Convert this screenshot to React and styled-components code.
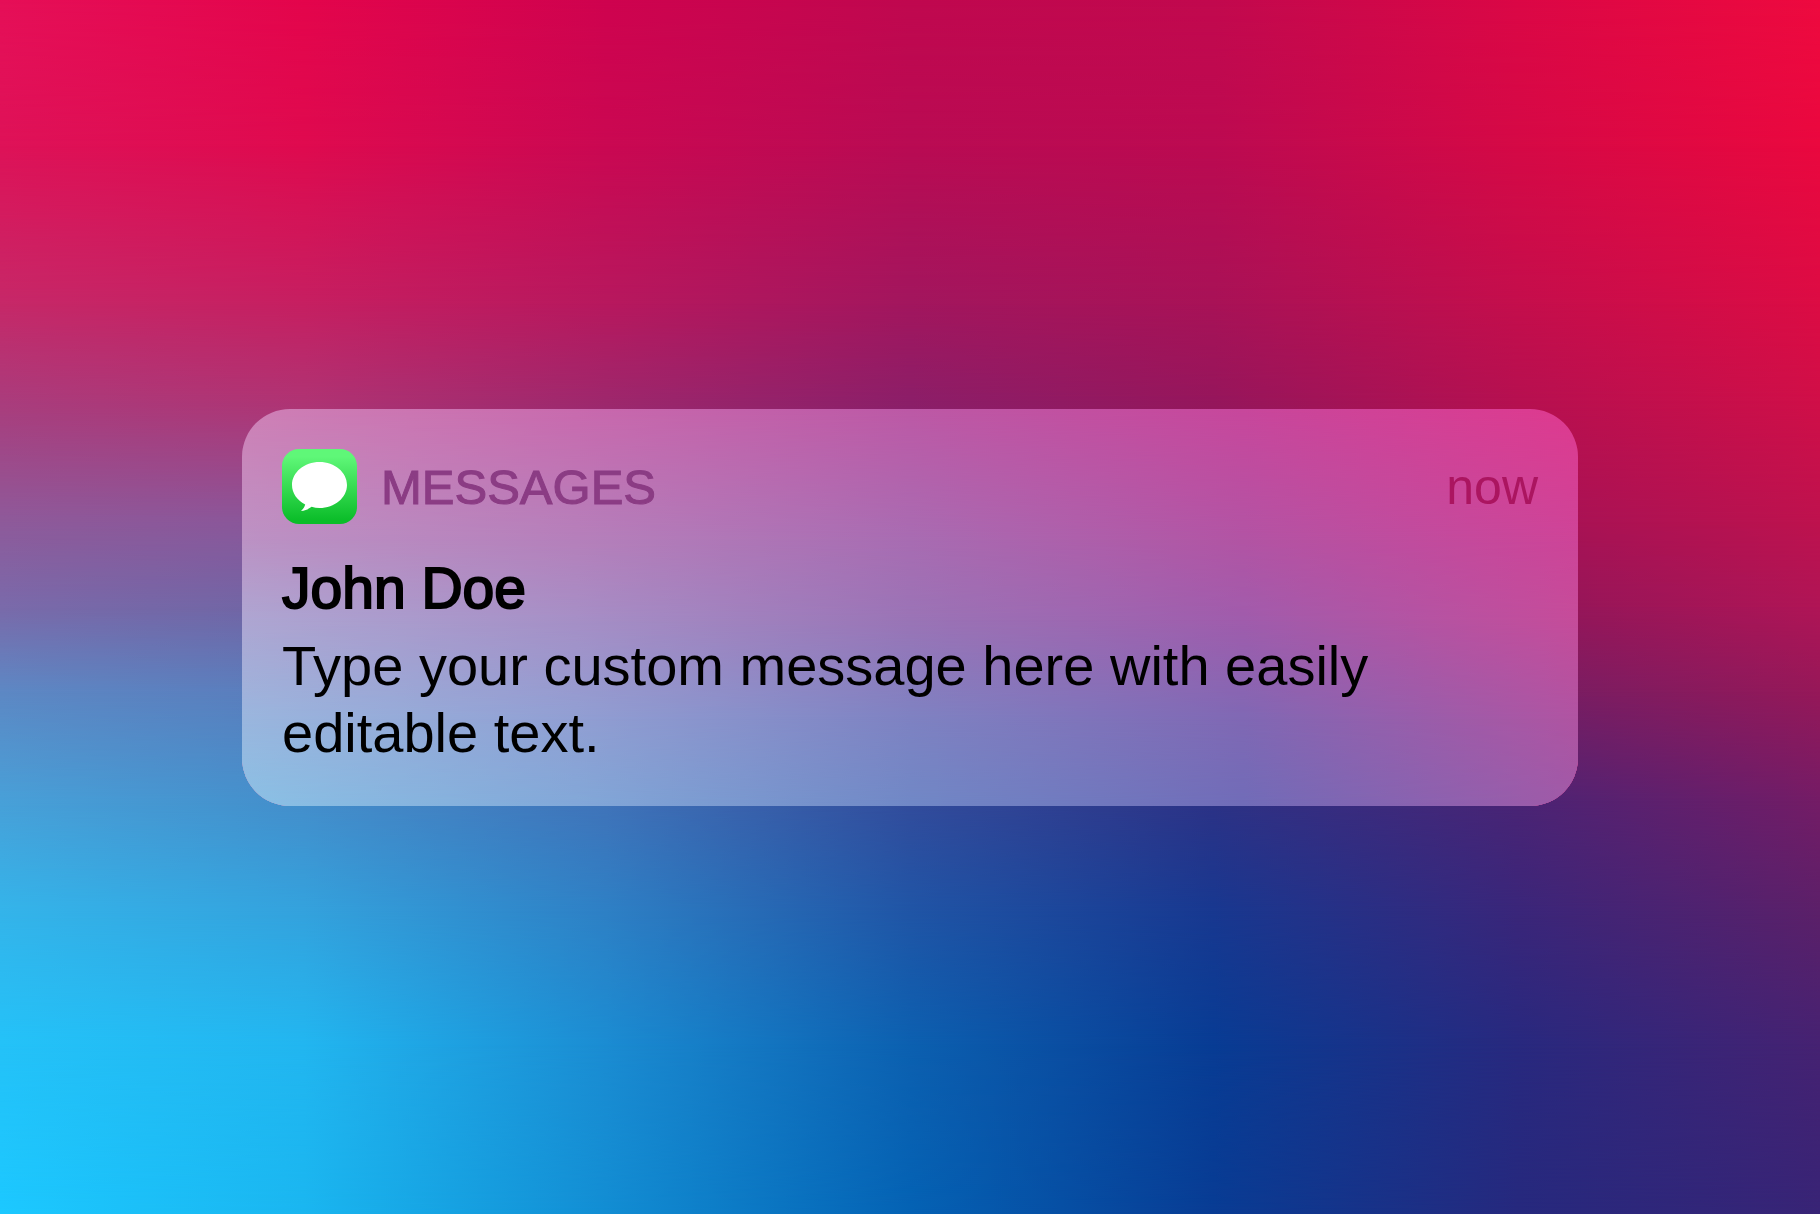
import React from "react";
import styled, { createGlobalStyle } from "styled-components";

const GlobalStyle = createGlobalStyle`
  *, *::before, *::after {
    box-sizing: border-box;
  }

  body {
    margin: 0;
    font-family: "Liberation Sans", Arial, Helvetica, sans-serif;
  }
`;

// each row is a list of colours spread evenly from left to right,
// "at" is how far down (in %) the row sits
const WALLPAPER = [
  { at: 0, colors: ["#e60f58", "#e4054c", "#cf034f", "#c0084f", "#c2094e", "#db0746", "#ee0a3f"] },
  { at: 12, colors: ["#de1258", "#df0a4f", "#ca0852", "#b90b53", "#bc0a51", "#d50946", "#ea083f"] },
  { at: 25, colors: ["#c62868", "#c61f61", "#b7185e", "#a2165e", "#a81257", "#c40e4c", "#dc0c44"] },
  { at: 33, colors: ["#aa3c7c", "#b03373", "#9e276c", "#8c1e68", "#96165c", "#b61050", "#d00f48"] },
  { at: 43, colors: ["#8e5a9a", "#8a569a", "#7c4590", "#743080", "#80256a", "#a41256", "#be124e"] },
  { at: 50, colors: ["#7a6aaa", "#7064a4", "#6458a0", "#5c4090", "#6a2c78", "#90165a", "#b01556"] },
  { at: 57, colors: ["#5d88c4", "#5a7cbc", "#5068b0", "#484c9c", "#503084", "#741e64", "#961859"] },
  { at: 66, colors: ["#48a0d8", "#448ecb", "#4073b9", "#324c9c", "#2c3286", "#4a2475", "#741c66"] },
  { at: 75, colors: ["#34b4ea", "#34a2dd", "#2e80c5", "#2055a6", "#183890", "#3a267a", "#5c2069"] },
  { at: 86, colors: ["#24c2f8", "#22b6f0", "#1b8cd2", "#0c60b0", "#083c94", "#28297f", "#462272"] },
  { at: 100, colors: ["#1cc8ff", "#1ab6f0", "#128dd3", "#0462b4", "#083c94", "#26297e", "#382476"] },
];

const GLASS = [
  { at: 0, colors: ["#cf80b6", "#c96aae", "#bd59a6", "#c8479c", "#df3a8f"] },
  { at: 33, colors: ["#bc92c4", "#b580bb", "#a86cb2", "#b254a4", "#ce4498"] },
  { at: 53, colors: ["#aea6d2", "#a68fc6", "#9a74b6", "#a05cac", "#c64c9a"] },
  { at: 78, colors: ["#9ab6de", "#919fd3", "#7e82c2", "#8068b4", "#b054a2"] },
  { at: 100, colors: ["#8ac1e5", "#82a8d8", "#7088c6", "#706cb8", "#a05aa8"] },
];

const Layers = styled.div`
  position: absolute;
  inset: 0;
  z-index: -1;
  display: grid;
`;

const Layer = styled.div`
  grid-area: 1 / 1;
  background: linear-gradient(to right, ${(props) => props.$colors.join(", ")});
  mask-image: ${(props) =>
    props.$to === 0
      ? "none"
      : `linear-gradient(to bottom, transparent ${props.$from}%, black ${props.$to}%)`};
`;

const Screen = styled.main`
  position: relative;
  isolation: isolate;
  min-height: 100vh;
  padding: 32px 242px;
  display: flex;
  align-items: center;
`;

const Card = styled.article`
  position: relative;
  isolation: isolate;
  overflow: hidden;
  flex: 1;
  padding: 40px;
  border-radius: 48px;
  color: #000;
`;

const CardHeader = styled.header`
  display: flex;
  align-items: center;
  height: 76px;
  margin-bottom: 30px;
`;

const AppIcon = styled.svg`
  flex: none;
  width: 75px;
  height: 75px;
  margin-right: 24px;
`;

const AppName = styled.span`
  flex: 1;
  font-size: 49px;
  line-height: 60px;
  color: #8b3c84;
  -webkit-text-stroke: 1px #8b3c84;
`;

const Time = styled.time`
  font-size: 50px;
  line-height: 60px;
  color: #ab1560;
`;

const Sender = styled.h1`
  margin: 0 0 10px;
  font-size: 57px;
  font-weight: 400;
  line-height: 67px;
  -webkit-text-stroke: 2px #000;
`;

const Message = styled.p`
  max-width: 1140px;
  margin: 0;
  font-size: 56px;
  line-height: 67px;
`;

const Gradient = ({ rows }) => (
  <Layers aria-hidden="true">
    {rows.map((row, index) => (
      <Layer
        key={row.at}
        $colors={row.colors}
        $from={index > 0 ? rows[index - 1].at : 0}
        $to={row.at}
      />
    ))}
  </Layers>
);

const MessagesIcon = () => (
  <AppIcon viewBox="0 0 75 75" aria-hidden="true">
    <defs>
      <linearGradient id="messages-green" x1="0" y1="0" x2="0" y2="1">
        <stop offset="0.1" stopColor="#5ff778" />
        <stop offset="0.95" stopColor="#0bbd29" />
      </linearGradient>
    </defs>
    <rect width="75" height="75" rx="17" fill="url(#messages-green)" />
    <path
      fill="#fff"
      d="M37.5 13C22.300 13 10 23.300 10 36c0 8 5 15.200 13.200 19.500-.7 2.600-2.200 4.700-4.200 6.500 4.200-.4 7.600-1.800 10.600-4.200 2.500.8 5.200 1.200 7.900 1.200C52.700 59 65 48.700 65 36S52.700 13 37.500 13z"
    />
  </AppIcon>
);

const Notification = ({ app, time, sender, children }) => (
  <Card>
    <Gradient rows={GLASS} />
    <CardHeader>
      <MessagesIcon />
      <AppName>{app}</AppName>
      <Time>{time}</Time>
    </CardHeader>
    <Sender>{sender}</Sender>
    <Message>{children}</Message>
  </Card>
);

const App = () => (
  <>
    <GlobalStyle />
    <Screen>
      <Gradient rows={WALLPAPER} />
      <Notification app="MESSAGES" time="now" sender="John Doe">
        Type your custom message here with easily editable text.
      </Notification>
    </Screen>
  </>
);

export default App;
